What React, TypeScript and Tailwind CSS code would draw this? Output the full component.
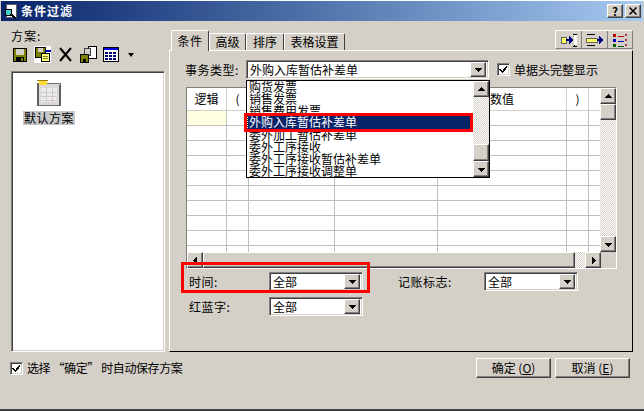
const font = { fontFamily: '"Noto Sans CJK SC", "Liberation Sans", sans-serif' };

const raised =
  "border border-t-white border-l-white border-r-[#404040] border-b-[#404040] shadow-[inset_-1px_-1px_0_#808080] bg-[#d4d0c8]";
const sunken =
  "border border-t-[#808080] border-l-[#808080] border-r-white border-b-white shadow-[inset_1px_1px_0_#404040,inset_-1px_-1px_0_#d4d0c8]";
const checker =
  "bg-[repeating-conic-gradient(#d4d0c8_0_25%,#ffffff_0_50%)] bg-[length:2px_2px]";

const listItems = [
  "购货发票",
  "销售发票",
  "销售费用发票",
  "外购入库暂估补差单",
  "委外加工暂估补差单",
  "委外工序接收",
  "委外工序接收暂估补差单",
  "委外工序接收调整单",
];

const Arrow = ({ dir }: { dir: "up" | "down" | "left" | "right" }) => {
  const pts = {
    up: "1,6 8,6 4.5,2",
    down: "1,3 8,3 4.5,7",
    left: "6,1 6,8 2,4.5",
    right: "3,1 3,8 7,4.5",
  }[dir];
  return (
    <svg width="9" height="9" viewBox="0 0 9 9" shapeRendering="crispEdges">
      <polygon points={pts} fill="#000" />
    </svg>
  );
};

const ScrollBtn = ({ dir, className = "" }: { dir: "up" | "down" | "left" | "right"; className?: string }) => (
  <div className={`${raised} flex items-center justify-center shrink-0 ${className}`}>
    <Arrow dir={dir} />
  </div>
);

const Combo = ({ value, width }: { value: string; width: string }) => (
  <div className={`${sunken} ${width} h-[19px] bg-white flex items-center justify-between p-[2px]`}>
    <span className="pl-[1px] text-[12px] leading-none text-black">{value}</span>
    <ScrollBtn dir="down" className="w-[16px] h-[15px]" />
  </div>
);

const Check = () => (
  <div className={`${sunken} w-[13px] h-[13px] bg-white flex items-center justify-center shrink-0`}>
    <svg width="9" height="9" viewBox="0 0 9 9" shapeRendering="crispEdges">
      <path d="M1 4 L3.5 7 L8 1.5" fill="none" stroke="#000" strokeWidth="1.6" />
    </svg>
  </div>
);

const Floppy = () => (
  <svg width="16" height="16" viewBox="0 0 16 16" shapeRendering="crispEdges">
    <rect x="1" y="1" width="14" height="14" fill="#000" />
    <rect x="2" y="2" width="12" height="12" fill="#808000" />
    <rect x="4" y="2" width="8" height="6" fill="#d4d0c8" />
    <rect x="4" y="10" width="8" height="4" fill="#000" />
    <rect x="9" y="11" width="2" height="3" fill="#808000" />
  </svg>
);

const SaveAs = () => (
  <svg width="17" height="17" viewBox="0 0 17 17" shapeRendering="crispEdges">
    <rect width="17" height="17" fill="#fff" />
    <rect x="1" y="1" width="11" height="11" fill="#000" />
    <rect x="2" y="2" width="9" height="9" fill="#808000" />
    <rect x="4" y="2" width="5" height="4" fill="#d4d0c8" />
    <rect x="11" y="4" width="6" height="2" fill="#0000c0" />
    <rect x="7" y="7" width="9" height="9" fill="#000" />
    <rect x="8" y="8" width="7" height="7" fill="#ffff80" />
    <path d="M9 10h5M9 12h5" stroke="#808000" />
  </svg>
);

const Delete = () => (
  <svg width="15" height="15" viewBox="0 0 15 15">
    <path d="M2 1 L13 14 M13 1 L2 14" stroke="#000" strokeWidth="2" />
  </svg>
);

const CopyScheme = () => (
  <svg width="17" height="17" viewBox="0 0 17 17" shapeRendering="crispEdges">
    <rect x="8.5" y="0.5" width="8" height="12" fill="#fff" stroke="#000" />
    <rect x="4.5" y="2.5" width="6" height="7" fill="#d4d0c8" stroke="#404040" />
    <rect x="0" y="8" width="9" height="9" fill="#000" />
    <rect x="1" y="9" width="7" height="7" fill="#808000" />
    <rect x="3" y="13" width="3" height="3" fill="#000" />
  </svg>
);

const TableIcon = () => (
  <svg width="16" height="15" viewBox="0 0 16 15" shapeRendering="crispEdges">
    <rect x="0.5" y="0.5" width="15" height="14" fill="#fff" stroke="#000" />
    <rect x="1" y="1" width="14" height="2" fill="#0000e0" />
    {[5, 8, 11].map((y) =>
      [2, 6, 10].map((x) => <rect key={`${x}-${y}`} x={x} y={y} width="3" height="2" fill="#000080" />)
    )}
  </svg>
);

const SchemeIcon = () => (
  <svg width="24" height="26" viewBox="0 0 24 26" shapeRendering="crispEdges">
    <rect x="1" y="3" width="22" height="22" fill="#d8d8d8" stroke="#707070" />
    <rect x="0" y="3" width="2" height="23" fill="#606060" />
    <rect x="22" y="5" width="2" height="21" fill="#606060" />
    <rect x="2" y="0" width="8" height="5" fill="#ffd830" />
    <rect x="0" y="0" width="11" height="1" fill="#a08000" />
    <rect x="4" y="8" width="16" height="14" fill="#ececec" />
    <path d="M4 12h16M4 16h16M4 20h16M9 8v14M15 8v14" stroke="#d0c8c8" />
  </svg>
);

const TitleIcon = () => (
  <svg width="14" height="15" viewBox="0 0 14 15" shapeRendering="crispEdges">
    <rect x="2" y="0" width="10" height="13" fill="#fff" stroke="#606060" />
    <rect x="1" y="5" width="6" height="6" fill="#40d0d0" stroke="#000" />
    <path d="M7 10 L12 15" stroke="#000" strokeWidth="2" />
  </svg>
);

const ColInIcon = () => (
  <svg width="16" height="14" viewBox="0 0 16 14" shapeRendering="crispEdges">
    <rect x="0" y="4" width="5" height="6" fill="#ffff60" stroke="#606060" />
    <path d="M5 7h5" stroke="#000080" strokeWidth="2" />
    <polygon points="8,3 12,7 8,11" fill="#000080" />
    <path d="M12 1h4M12 13h4M13 1v12" stroke="#000" />
    <rect x="13" y="2" width="3" height="10" fill="#fff" />
  </svg>
);

const ColOutIcon = () => (
  <svg width="17" height="14" viewBox="0 0 17 14" shapeRendering="crispEdges">
    <path d="M1 1h8M1 12h8" stroke="#000" />
    <rect x="0" y="5" width="11" height="4" fill="#ffff60" stroke="#606060" />
    <path d="M11 7h3" stroke="#000080" strokeWidth="2" />
    <polygon points="13,3 17,7 13,11" fill="#000080" />
  </svg>
);

const ListIcon = () => (
  <svg width="15" height="14" viewBox="0 0 15 14" shapeRendering="crispEdges">
    <rect x="0" y="1" width="3" height="3" fill="#c00000" />
    <rect x="0" y="6" width="3" height="3" fill="#0000c0" />
    <rect x="0" y="11" width="3" height="3" fill="#006000" />
    <path d="M5 3h6" stroke="#c00000" />
    <path d="M5 8h6" stroke="#0000c0" />
    <path d="M5 13h6" stroke="#006000" />
    <path d="M12 1l2 2M14 1l-2 2M12 6l2 2M14 6l-2 2M12 11l2 2M14 11l-2 2" stroke="#a04040" />
  </svg>
);

const tabs = [
  { label: "高级", w: "w-[37px]" },
  { label: "排序", w: "w-[38px]" },
  { label: "表格设置", w: "w-[61px]" },
];

const colClasses = [
  "w-[40px]",
  "w-[22px]",
  "w-[86px]",
  "w-[103px]",
  "w-[129px]",
  "w-[22px]",
];

const GridRow = ({ first }: { first?: boolean }) => (
  <div className="flex h-[15px] border-b border-[#c0c0c0] shrink-0">
    {colClasses.map((c, i) => (
      <div
        key={i}
        className={`${c} border-r border-[#c0c0c0] ${first && i === 0 ? "bg-[#ffffe1]" : ""}`}
      />
    ))}
  </div>
);

export default function App() {
  return (
    <div
      style={font}
      className="relative w-[644px] h-[411px] overflow-hidden bg-[#d4d0c8] text-[12px] leading-none text-black border-t border-t-white border-b-2 border-b-[#404040]"
    >
      {/* title bar */}
      <div className="flex items-center justify-between h-[20px] mx-[1px] pl-[3px] pr-[2px] bg-gradient-to-r from-[#0a246a] to-[#a6caf0]">
        <div className="flex items-center gap-[3px]">
          <TitleIcon />
          <span className="text-white font-bold text-[12px] tracking-[1px]">条件过滤</span>
        </div>
        <div className="flex gap-[2px]">
          <div className={`${raised} w-[16px] h-[14px] flex items-center justify-center font-bold text-[11px]`}>?</div>
          <div className={`${raised} w-[16px] h-[14px] flex items-center justify-center`}>
            <svg width="8" height="8" viewBox="0 0 8 8">
              <path d="M0.5 0.5 L7.5 7.5 M7.5 0.5 L0.5 7.5" stroke="#000" strokeWidth="1.5" />
            </svg>
          </div>
        </div>
      </div>

      <div className="flex">
        {/* left column */}
        <div className="ml-[11px] w-[154px] shrink-0">
          <div className="pt-[9px] h-[25px] tracking-[1px]">方案:</div>
          <div className="flex items-center gap-[6px] h-[17px] pl-[1px]">
            <Floppy />
            <SaveAs />
            <div className="mx-[1px]"><Delete /></div>
            <CopyScheme />
            <TableIcon />
            <svg width="8" height="4" viewBox="0 0 8 4" className="ml-[2px]">
              <polygon points="1,0 7,0 4,4" fill="#000" />
            </svg>
          </div>
          <div className={`${sunken} mt-[8px] h-[281px] bg-white pt-[8px]`}>
            <div className="w-[74px] flex flex-col items-center">
              <SchemeIcon />
              <span className="mt-[5px] bg-[#c8c8c8] px-[1px] py-[1px] text-[12px] tracking-[0.5px]">默认方案</span>
            </div>
          </div>
        </div>

        {/* right column */}
        <div className="ml-[4px] w-[465px] shrink-0">
          <div className="flex items-end justify-between h-[29px] relative z-10">
            <div className="flex items-end pl-[2px]">
              <div className="w-[38px] h-[21px] -mb-[1px] bg-[#d4d0c8] border-t border-l border-white border-r border-r-[#404040] rounded-t-[2px] flex items-center justify-center tracking-[0.5px]">
                条件
              </div>
              {tabs.map((t) => (
                <div
                  key={t.label}
                  className={`${t.w} h-[17px] border-t border-l border-white border-r border-r-[#404040] rounded-t-[2px] flex items-center justify-center`}
                >
                  {t.label}
                </div>
              ))}
            </div>
            <div className="flex mb-[1px] mr-[1px] h-[19px] border-t border-l border-white border-b border-b-[#808080] border-r border-r-[#808080]">
              <div className="w-[26px] flex items-center justify-center border-r border-r-[#808080]"><ColInIcon /></div>
              <div className="w-[26px] flex items-center justify-center border-r border-r-[#808080]"><ColOutIcon /></div>
              <div className="w-[24px] flex items-center justify-center"><ListIcon /></div>
            </div>
          </div>

          <div className="w-[464px] h-[302px] border-t border-l border-white border-r border-b border-r-[#000] border-b-[#000] pl-[16px] pt-[9px]">
            <div className="flex items-center h-[19px]">
              <span className="w-[60px] -ml-[1px] mr-[1px] tracking-[0.5px]">事务类型:</span>
              <Combo value="外购入库暂估补差单" width="w-[243px]" />
              <div className="ml-[8px] flex items-center gap-[4px]">
                <Check />
                <span>单据头完整显示</span>
              </div>
            </div>

            {/* grid */}
            <div className="mt-[8px] w-[431px] h-[182px] border border-t-[#808080] border-l-[#808080] border-r-white border-b-white flex flex-col overflow-hidden relative">
              <div className="flex flex-1 min-h-0">
                <div className="w-[414px] bg-white flex flex-col overflow-hidden">
                  <div className="flex h-[23px] shrink-0 border-b border-[#d4d0c8] bg-white">
                    {["逻辑", "(", "", "", "数值", ")"].map((h, i) => (
                      <div
                        key={i}
                        className={`${colClasses[i]} border-r border-[#d4d0c8] flex items-center justify-center`}
                      >
                        {h}
                      </div>
                    ))}
                  </div>
                  <GridRow first />
                  {[0, 1, 2, 3, 4, 5, 6, 7, 8].map((n) => (
                    <GridRow key={n} />
                  ))}
                </div>
                <div className={`w-[16px] flex flex-col ${checker}`}>
                  <ScrollBtn dir="up" className="h-[16px]" />
                  <div className={`${raised} h-[16px]`} />
                  <div className="flex-1" />
                  <ScrollBtn dir="down" className="h-[16px]" />
                </div>
              </div>
              <div className="flex h-[16px] shrink-0">
                <ScrollBtn dir="left" className="w-[16px]" />
                <div className={`${raised} w-[372px]`} />
                <div className={`w-[10px] ${checker}`} />
                <ScrollBtn dir="right" className="w-[16px]" />
                <div className="flex-1" />
              </div>
            </div>

            <div className="flex items-center mt-[3px] h-[19px] pl-[3px]">
              <span className="w-[80px] tracking-[0.5px]">时间:</span>
              <Combo value="全部" width="w-[94px]" />
              <span className="ml-[35px] w-[86px] tracking-[0.5px]">记账标志:</span>
              <Combo value="全部" width="w-[94px]" />
            </div>
            <div className="flex items-center mt-[6px] h-[19px] pl-[3px]">
              <span className="w-[80px] tracking-[0.5px]">红蓝字:</span>
              <Combo value="全部" width="w-[94px]" />
            </div>
          </div>
        </div>
      </div>

      {/* bottom row */}
      <div className="flex items-center justify-between h-[20px] mt-[6px] pl-[10px] pr-[14px]">
        <div className="flex items-center gap-[4px]">
          <Check />
          <span className="tracking-[-0.4px]">选择 “确定” 时自动保存方案</span>
        </div>
        <div className="flex gap-[4px]">
          <div className={`${raised} w-[75px] h-[20px] flex items-center justify-center`}>确定 (<u>O</u>)</div>
          <div className={`${raised} w-[75px] h-[20px] flex items-center justify-center`}>取消 (<u>E</u>)</div>
        </div>
      </div>

      {/* open combo list */}
      <div className="absolute left-[246px] top-[79px] w-[244px] h-[98px] bg-white border border-black flex z-20">
        <div className="flex-1 overflow-hidden pl-[2px] relative">
          <div className="flex flex-col">
            {listItems.map((item, i) => (
              <div
                key={item}
                className={
                  i === 3
                    ? "h-[16px] -ml-[2px] pl-[2px] -mt-[3px] -mb-[1px] relative flex items-center bg-[#0a246a] text-white outline-dotted outline-1 -outline-offset-1 outline-[#ffffa0]"
                    : "h-[12px] leading-[12px]"
                }
              >
                {item}
              </div>
            ))}
          </div>
        </div>
        <div className={`w-[16px] flex flex-col ${checker}`}>
          <ScrollBtn dir="up" className="h-[16px]" />
          <div className="flex-1" />
          <div className={`${raised} h-[17px]`} />
          <ScrollBtn dir="down" className="h-[16px]" />
        </div>
      </div>

      {/* red call-outs */}
      <div className="absolute left-[244px] top-[112px] w-[229px] h-[19px] border-[3px] border-[#ff0000] z-30" />
      <div className="absolute left-[181px] top-[261px] w-[189px] h-[31px] border-[3px] border-[#ff0000] z-30" />
    </div>
  );
}
